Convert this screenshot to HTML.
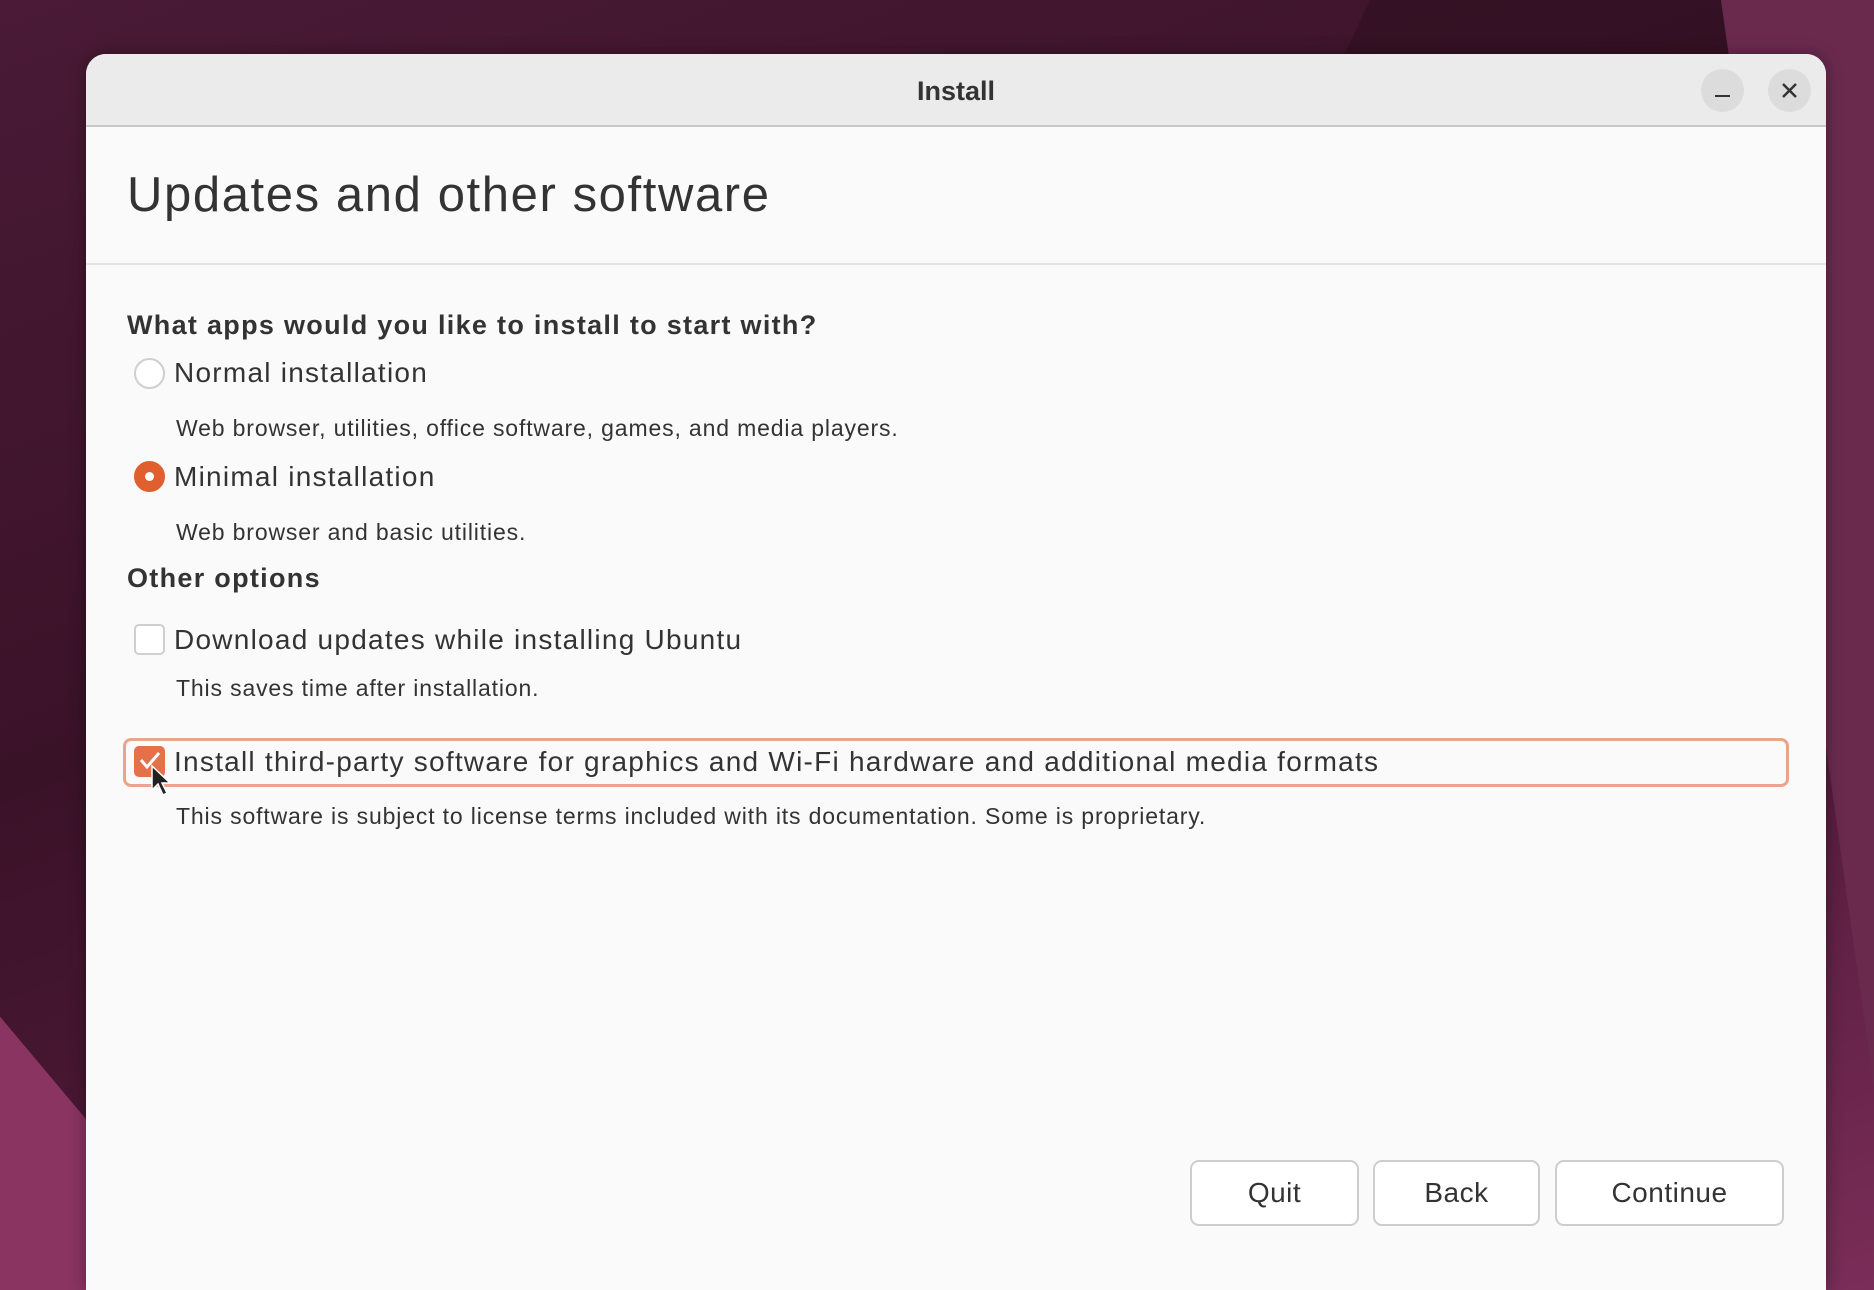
<!DOCTYPE html>
<html><head><meta charset="utf-8"><style>
*{margin:0;padding:0;box-sizing:border-box}
html{width:1874px;height:1290px;overflow:hidden}
body{width:1874px;height:1290px;overflow:hidden;position:relative;font-family:"Liberation Sans",sans-serif;color:#3d3d3d;
background:linear-gradient(160deg,#4a1a36 0%,#3a1228 40%,#521a3a 70%,#7a2d58 100%)}
.bgwrap{position:absolute;left:0;top:0;width:1874px;height:1290px;overflow:hidden}
.bg1{position:absolute;left:1300px;top:0;width:500px;height:300px;background:#2f0f20;transform:skewX(-25deg);opacity:.6}
.bg2{position:absolute;left:1721px;top:0;width:500px;height:1600px;background:#6a2a4e;transform:rotate(-8deg);transform-origin:0 0}
.bg3{position:absolute;left:-150px;top:1000px;width:300px;height:500px;background:#8a3462;transform:rotate(-40deg)}
.win{position:absolute;left:86px;top:54px;width:1740px;height:1236px;background:#fafafa;border-radius:20px 20px 0 0;overflow:hidden;box-shadow:0 0 16px rgba(0,0,0,.35)}
.tb{height:73px;background:#ebebeb;border-bottom:2px solid #c8c8c8;position:relative}
.tb .t{position:absolute;left:0;right:0;top:22px;text-align:center;font-weight:bold;font-size:27px;color:#333}
.cb{position:absolute;top:15px;width:43px;height:43px;border-radius:50%;background:#dcdcdc}
.hd{height:138px;border-bottom:2px solid #e4e4e4;position:relative}
.hd div{position:absolute;left:41px;top:40px;font-size:49px;color:#333;letter-spacing:1.6px}
.a{position:absolute;white-space:nowrap}
.q{font-weight:bold;font-size:27px;color:#333;letter-spacing:1.3px}
.l{font-size:28px;color:#333;letter-spacing:1.25px}
.d{font-size:23px;color:#333;letter-spacing:0.85px}
.radio{position:absolute;width:31px;height:31px;border-radius:50%;border:2px solid #cfcfcf;background:#fff}
.chk{position:absolute;width:31px;height:31px;border-radius:5px;border:2px solid #cfcfcf;background:#fff}
.btn{position:absolute;top:1106px;height:66px;border:2px solid #cdcdcd;border-radius:9px;background:#fff;font-size:28px;color:#333;text-align:center;line-height:62px;letter-spacing:0.5px}
</style></head><body>
<div class="bgwrap"><div class="bg1"></div><div class="bg2"></div><div class="bg3"></div></div>
<div class="win">
 <div class="tb"><div class="t">Install</div>
  <div class="cb" style="left:1615px"><div style="position:absolute;left:14px;top:26px;width:15px;height:2px;background:#333"></div></div>
  <div class="cb" style="left:1682px"><svg width="43" height="43" style="position:absolute;left:0;top:0"><path d="M15 15L28 28M28 15L15 28" stroke="#333" stroke-width="2.5"/></svg></div>
 </div>
 <div class="hd"><div>Updates and other software</div></div>
 <div class="a q" style="left:41px;top:256px">What apps would you like to install to start with?</div>
 <div class="radio" style="left:48px;top:304px"></div>
 <div class="a l" style="left:88px;top:303px">Normal installation</div>
 <div class="a d" style="left:90px;top:361px">Web browser, utilities, office software, games, and media players.</div>
 <div class="radio" style="left:48px;top:407px;background:#e05f2f;border-color:#e05f2f"><div style="position:absolute;left:9px;top:9px;width:9px;height:9px;border-radius:50%;background:#fff"></div></div>
 <div class="a l" style="left:88px;top:407px">Minimal installation</div>
 <div class="a d" style="left:90px;top:465px">Web browser and basic utilities.</div>
 <div class="a q" style="left:41px;top:509px">Other options</div>
 <div class="chk" style="left:48px;top:570px"></div>
 <div class="a l" style="left:88px;top:570px">Download updates while installing Ubuntu</div>
 <div class="a d" style="left:90px;top:621px">This saves time after installation.</div>
 <div style="position:absolute;left:37px;top:684px;width:1666px;height:49px;border:3px solid #e8a58c;border-radius:8px"></div>
 <div class="chk" style="left:48px;top:692px;background:#e4714a;border-color:#e4714a"><svg width="31" height="31" style="position:absolute;left:-2px;top:-2px"><path d="M7 14L13 21L25 7" stroke="#fff" stroke-width="3" fill="none"/></svg></div>
 <svg width="24" height="36" style="position:absolute;left:64px;top:710px"><path d="M2 2L2 26L8 20L13 31L17 29L12 19L20 19Z" fill="#222" stroke="#fff" stroke-width="1.5"/></svg>
 <div class="a l" style="left:88px;top:692px">Install third-party software for graphics and Wi-Fi hardware and additional media formats</div>
 <div class="a d" style="left:90px;top:749px">This software is subject to license terms included with its documentation. Some is proprietary.</div>
 <div class="btn" style="left:1104px;width:169px">Quit</div>
 <div class="btn" style="left:1287px;width:167px">Back</div>
 <div class="btn" style="left:1469px;width:229px">Continue</div>
</div>
</body></html>
